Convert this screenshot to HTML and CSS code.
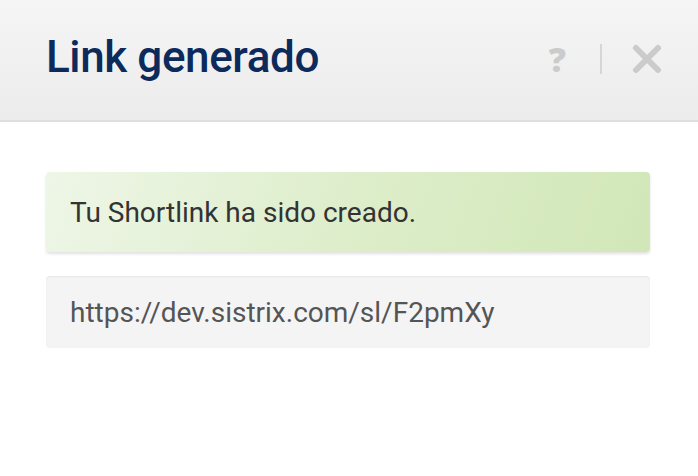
FILE: index.html
```html
<!DOCTYPE html>
<html>
<head>
<title>Link generado</title>
<link rel="stylesheet" href="styles.css">
</head>
<body>
    <div class="modal">
        <div class="modal-header">
            <h1>Link generado</h1>
            <div class="header-actions">
                <span class="help">?</span>
                <span class="divider"></span>
                <svg class="close" width="30" height="30" viewBox="0 0 30 30">
                    <path d="M4 4 L26 26 M26 4 L4 26" stroke="#cbcbcb" stroke-width="6" stroke-linecap="round"/>
                </svg>
            </div>
        </div>
        <div class="modal-body">
            <div class="alert-success">Tu Shortlink ha sido creado.</div>
            <div class="link-field">https://dev.sistrix.com/sl/F2pmXy</div>
        </div>
    </div>
</body>
</html>
```

FILE: styles.css
```css
body {
    margin: 0;
    padding: 0;
    background-color: #ffffff;
    font-family: 'Roboto', sans-serif;
}

.modal {
    width: 698px;
    height: 476px;
    background-color: #ffffff;
}

.modal-header {
    height: 122px;
    background: linear-gradient(to bottom, #f5f5f5, #ececec);
    border-bottom: 2px solid #dedede;
    display: flex;
    align-items: center;
    justify-content: space-between;
    padding: 0 36px 0 46px;
    box-sizing: border-box;
}

.modal-header h1 {
    margin: 0;
    margin-top: -6px;
    font-family: 'Roboto', sans-serif;
    font-weight: 500;
    font-size: 44px;
    letter-spacing: -0.4px;
    color: #0c2a5c;
}

.header-actions {
    display: flex;
    align-items: center;
    margin-top: -2px;
}

.help {
    font-family: 'Open Sans', sans-serif;
    font-weight: 800;
    font-size: 34px;
    color: #cbcbcb;
    line-height: 1;
    margin-left: 4px;
}

.divider {
    width: 2px;
    height: 30px;
    background-color: #d6d6d6;
    margin: 0 30px 0 34px;
}

.close {
    display: block;
}

.modal-body {
    padding: 50px 48px 0 46px;
    display: flex;
    flex-direction: column;
    gap: 24px;
}

.alert-success {
    height: 80px;
    box-sizing: border-box;
    padding: 0 24px;
    display: flex;
    align-items: center;
    border-radius: 4px;
    background: linear-gradient(110deg, #eef6e7 0%, #dcedc8 55%, #d1e7b8 100%);
    box-shadow: 0 2px 3px rgba(0, 0, 0, 0.12);
    font-size: 28px;
    color: #333333;
}

.link-field {
    height: 72px;
    box-sizing: border-box;
    padding: 0 24px;
    display: flex;
    align-items: center;
    border-radius: 4px;
    background-color: #f4f4f4;
    box-shadow: inset 0 1px 2px rgba(0, 0, 0, 0.06);
    font-size: 28px;
    color: #555555;
}
```
